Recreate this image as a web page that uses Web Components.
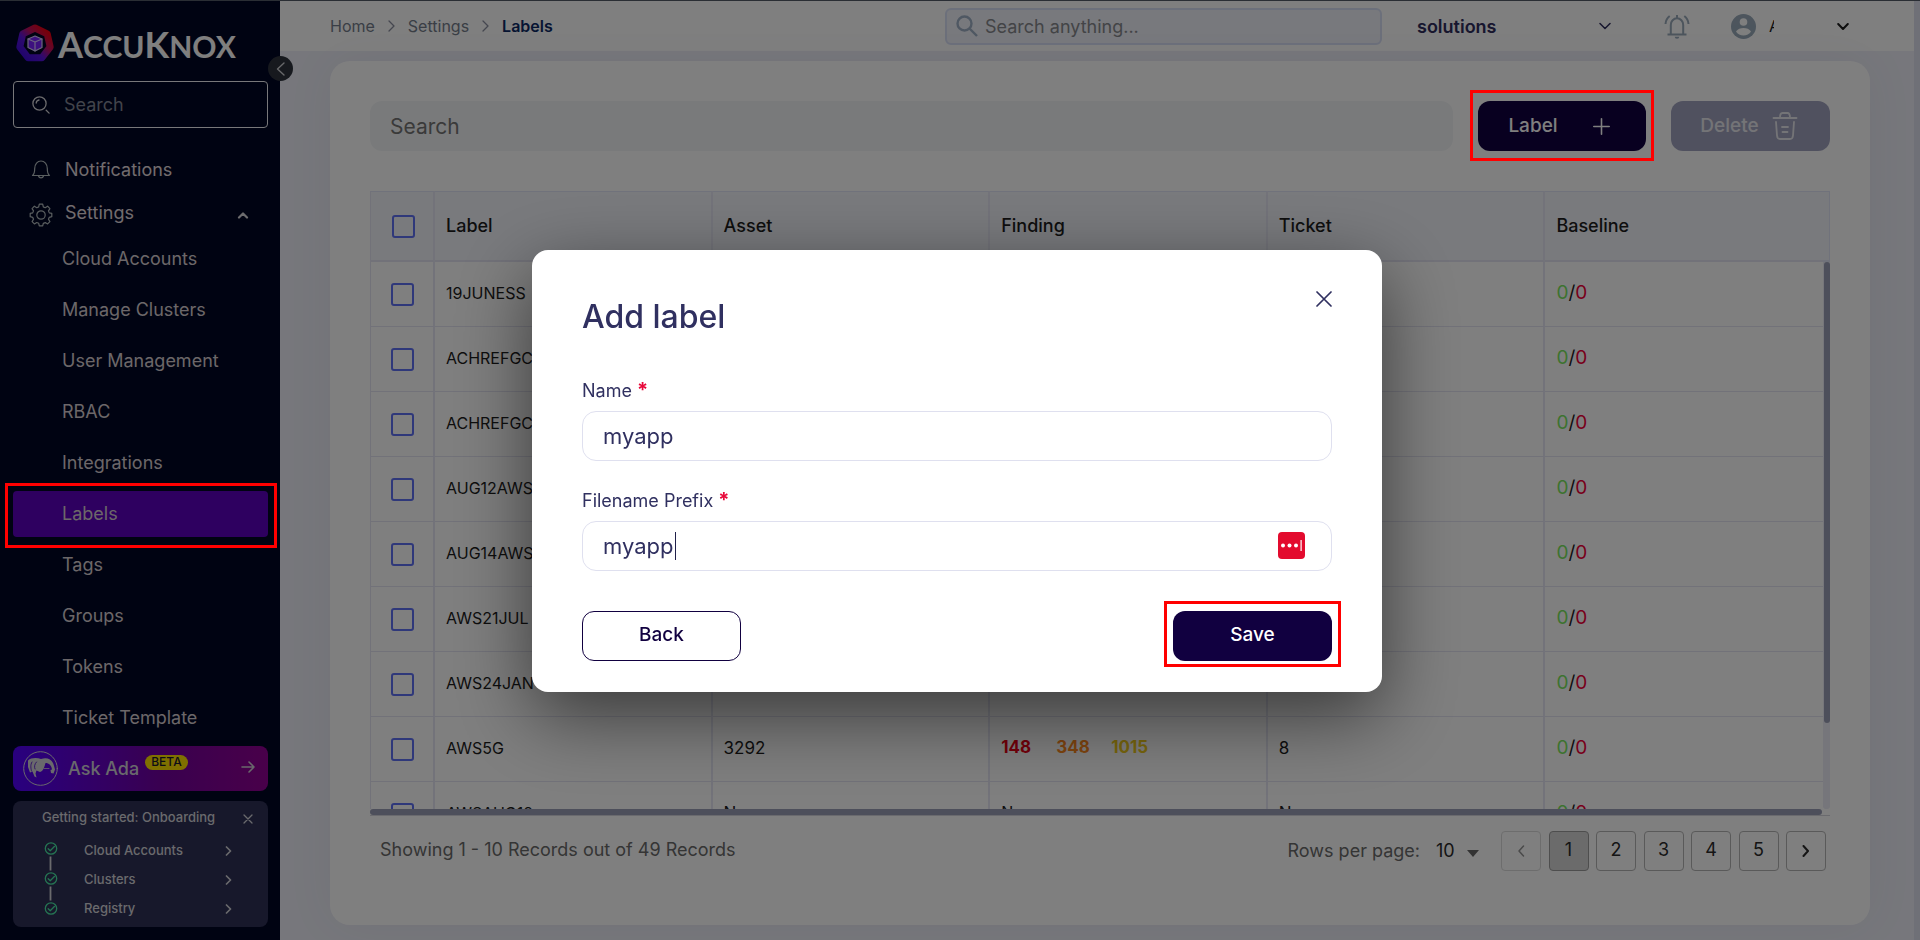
<!DOCTYPE html>
<html lang="en">
<head>
<meta charset="utf-8">
<meta name="viewport" content="width=device-width, initial-scale=1">
<title>Labels</title>
<style>
  body {
    margin: 0;
    font-family: Inter, "Open Sans", sans-serif;
    font-size: 18px;
    color: #1c1c1c;
  }
</style>
</head>
<body>
<ak-app></ak-app>
<script>
const RESET = `
  *, *::before, *::after { box-sizing: border-box; }
  button, input, select { font: inherit; color: inherit; margin: 0; padding: 0; border: 0; background: none; }
  input { min-width: 0; outline: none; }
  select { appearance: none; outline: none; }
  a { color: inherit; text-decoration: none; }
  ul, ol { list-style: none; margin: 0; padding: 0; }
  svg { display: block; flex: none; fill: none; }
  svg:not([stroke]) { stroke: currentColor; }
  svg:not([stroke-linecap]) { stroke-linecap: round; stroke-linejoin: round; }
`;

function define(name, html, setup) {
  const template = document.createElement('template');
  customElements.define(name, class extends HTMLElement {
    connectedCallback() {
      if (this.shadowRoot) return;
      template.innerHTML = `<style>${RESET}</style>` + (typeof html === 'function' ? html(this) : html);
      this.attachShadow({ mode: 'open' }).append(template.content.cloneNode(true));
      if (setup) setup(this, this.shadowRoot);
    }
  });
}

/* Red ring round whatever is slotted in */
define('ak-ring', `
<style>
  :host { display: block; position: relative; }
  .ring { position: absolute; inset: var(--ring-inset, -10px); border: 3px solid #ff0000; z-index: 20; pointer-events: none; }
</style>
<slot></slot><div class="ring"></div>`);

define('ak-button', el => `
<style>
  :host { display: block; }
  button {
    display: flex; align-items: center; justify-content: center; width: 100%; height: 50px;
    border-radius: 12px; font-size: 19px; font-weight: 500; cursor: pointer; padding-bottom: 2px;
  }
  .primary { background: #110040; color: #fff; }
  .outline { background: #fff; color: #110040; border: 1px solid #110040; }
  .muted { background: #a1a3bf; color: #e9e9ee; }
</style>
<button type="button" class="${el.getAttribute('variant')}"><slot></slot></button>`);

define('ak-nav-item', el => `
<style>
  :host { display: block; }
  a { display: flex; align-items: center; height: 46px; padding: 0 0 1px 49px; border-radius: 4px; color: #d8cfd2; }
  a.active { background: #5c00c0; }
</style>
<a href="#" class="${el.hasAttribute('active') ? 'active' : ''}"><slot></slot></a>`);

define('ak-onboarding', `
<style>
  :host { display: block; background: #2e3056; border-radius: 8px; padding: 4px 20px 5px 29px; font-size: 13px; font-weight: 500; color: #d4d4da; }
  header { display: flex; align-items: center; justify-content: space-between; height: 24px; margin-bottom: 6px; }
  button { padding: 4px 15px 0 0; margin-right: -20px; cursor: pointer; }
  .body { display: flex; gap: 26px; }
  ol { flex: 1; padding-right: 16px; }
  li a { display: flex; align-items: center; justify-content: space-between; height: 29px; }
  li svg { margin-top: 3px; }
  .steps { color: #4ae8a5; margin: 6px 0 0 2px; }
</style>
<header><span>Getting started: Onboarding</span>
  <button type="button" aria-label="Close"><svg width="10" height="10" viewBox="0 0 10 10" stroke-width="1.300"><path d="M1 1l8 8M9 1L1 9"/></svg></button>
</header>
<div class="body">
  <svg class="steps" width="14" height="76" viewBox="0 0 14 76" stroke-width="1.300">
    <path d="M6.500 15.500V29.500M6.500 45.500V59.500" stroke="#d4d4da" stroke-width="1.800" stroke-linecap="butt"/>
    <circle cx="7" cy="7.500" r="5.700"/><path d="M4.200 7.800l2 2 4.200-4.300"/>
    <circle cx="7" cy="37.500" r="5.700"/><path d="M4.200 37.800l2 2 4.200-4.300"/>
    <circle cx="7" cy="67.500" r="5.700"/><path d="M4.200 67.800l2 2 4.200-4.300"/>
  </svg>
  <ol>
    <li><a href="#">Cloud Accounts<svg width="7" height="10" viewBox="0 0 7 10" stroke-width="1.700"><path d="M1.500 1l4 4-4 4"/></svg></a></li>
    <li><a href="#">Clusters<svg width="7" height="10" viewBox="0 0 7 10" stroke-width="1.700"><path d="M1.500 1l4 4-4 4"/></svg></a></li>
    <li><a href="#">Registry<svg width="7" height="10" viewBox="0 0 7 10" stroke-width="1.700"><path d="M1.500 1l4 4-4 4"/></svg></a></li>
  </ol>
</div>`);

define('ak-sidebar', `
<style>
  :host { display: flex; flex-direction: column; position: relative; background: #000624; color: #e2d9dc; padding: 23px 12px 12px 13px; }
  .logo { display: flex; align-items: center; gap: 4px; height: 38px; padding-left: 3px; margin-bottom: 19px; color: #fff; font: 700 30px/38px Lato, sans-serif; }
  .logo big { font-size: 36px; }
  .logo span { padding-top: 3px; }
  .collapse { position: absolute; top: 55px; right: -13px; z-index: 1; display: grid; place-items: center; width: 25px; height: 25px; border-radius: 50%; background: #2e333d; color: #d0d0d4; cursor: pointer; }
  .search { display: flex; align-items: center; gap: 14px; height: 47px; padding-left: 18px; border: 1px solid #f0f0f4; border-radius: 4px; margin-bottom: 20px; color: #d8d8dc; }
  .search input { flex: 1; }
  .search input::placeholder { color: #848896; opacity: 1; }
  .top { display: flex; align-items: center; height: 43px; padding: 0 19px 0 16px; gap: 12px; }
  .top span { flex: 1; }
  .top svg { color: #b5bec0; }
  .top .gear { margin-top: 5px; }
  .top .up { margin-top: 5px; color: #d8d8dc; }
  .sub { display: grid; gap: 5px; padding: 2px 0 5px; }
  .ada { display: flex; align-items: center; height: 45px; width: 100%; padding: 0 13px 0 10px; margin-bottom: 10px; border-radius: 8px; background: linear-gradient(90deg, #5200fe, #74009e 60%, #920094); color: #d2d2d8; font-weight: 500; cursor: pointer; }
  .ada > span { margin: 0 6px 1px 10px; }
  .ada small { align-self: flex-start; margin: 9px auto 0 0; padding: 0 6px; height: 15px; border-radius: 8px; background: #ffe000; color: #1b1b2c; font-size: 12px; line-height: 13px; }
  .ada .go { margin-bottom: 4px; }
</style>
<a class="logo" href="#">
  <svg width="38" height="38" viewBox="0 0 38 38" stroke="none">
    <defs><linearGradient id="g" x1="1" y1="0" x2="0" y2="1"><stop offset=".1" stop-color="#f00010"/><stop offset=".38" stop-color="#c01060"/><stop offset=".62" stop-color="#5a12e0"/><stop offset="1" stop-color="#3a08d8"/></linearGradient></defs>
    <path d="M19 4L31.200 9.800L34.200 23L25.800 33.800H12.200L3.800 23L6.800 9.800Z" stroke="url(#g)" stroke-width="7" stroke-linejoin="round"/>
    <path d="M19 12l7 3v8.500l-7 3.500-7-3.500V15z" fill="#7a20ff" stroke="#d8c8ff" stroke-width="1.200"/>
    <path d="M12 15l7 3 7-3M19 18v9" stroke="#d8c8ff" stroke-width="1.200"/>
  </svg>
  <span><big>A</big>CCU<big>K</big>NOX</span>
</a>
<button class="collapse" type="button" aria-label="Collapse menu"><svg width="9" height="14" viewBox="0 0 9 14" stroke-width="1.400"><path d="M8 1L1.500 7 8 13"/></svg></button>
<div class="search">
  <svg width="18" height="18" viewBox="0 0 18 18" stroke-width="1.300"><circle cx="7.500" cy="7.500" r="6.600"/><path d="M4.200 7a3.300 3.300 0 0 1 2.800-3M14.200 14.200l2.900 2.900"/></svg>
  <input type="search" placeholder="Search" aria-label="Search menu">
</div>
<nav>
  <a class="top" href="#">
    <svg width="24" height="22" viewBox="0 0 24 22" stroke-width="1.200"><path d="M3.500 16.500c2-1.500 2.200-3.500 2.200-7C5.700 5 8.500 2 12 2s6.300 3 6.300 7.500c0 3.500.2 5.500 2.200 7zM9.500 17a2.600 2.600 0 0 0 5 0"/></svg>
    <span>Notifications</span>
  </a>
  <a class="top" href="#">
    <svg class="gear" width="24" height="24" viewBox="0 0 24 24" stroke-width="1.200"><circle cx="12" cy="12" r="4.200"/><path d="M10.300 1.200h3.400l.600 2.700 1.900.800 2.400-1.500 2.300 2.400-1.400 2.300.800 2 2.500.500v3.300l-2.600.700-.700 1.900 1.400 2.300-2.300 2.300-2.300-1.300-2 .800-.600 2.400h-3.400l-.600-2.500-2-.800-2.300 1.400-2.300-2.300 1.400-2.300-.800-2-2.500-.600v-3.300l2.500-.500.800-2L3.100 5.600l2.300-2.400 2.400 1.500 1.900-.800z"/></svg>
    <span>Settings</span>
    <svg class="up" width="12" height="8" viewBox="0 0 12 8" stroke-width="2.200"><path d="M2 6.500l4-4 4 4"/></svg>
  </a>
  <div class="sub">
    <ak-nav-item>Cloud Accounts</ak-nav-item>
    <ak-nav-item>Manage Clusters</ak-nav-item>
    <ak-nav-item>User Management</ak-nav-item>
    <ak-nav-item>RBAC</ak-nav-item>
    <ak-nav-item>Integrations</ak-nav-item>
    <ak-ring style="--ring-inset: -8px -9px -11px -8px"><ak-nav-item active>Labels</ak-nav-item></ak-ring>
    <ak-nav-item>Tags</ak-nav-item>
    <ak-nav-item>Groups</ak-nav-item>
    <ak-nav-item>Tokens</ak-nav-item>
    <ak-nav-item>Ticket Template</ak-nav-item>
  </div>
</nav>
<button class="ada" type="button">
  <svg width="35" height="35" viewBox="0 0 35 35" stroke-width="1"><circle cx="17.500" cy="17.500" r="16.800"/>
    <path d="M5 9.500C8 6.500 14 6.500 18 8c5-2 10-.500 12 4 1 2.400 1.500 4.500 2 6.500l-1.500 4-2.500-.500-.500-3 1.500-.500c-.500-4-3-6.500-6.500-6.500-1 3.500-2 8-5.500 9l-3.500-1.500-1 3 1 4-2-1-2-5-2.500 1L5 16z" fill="currentColor" stroke="none"/>
    <path d="M9 11c-2 3-1 7-.500 9M13.500 11c-2 2-2.500 5-1.500 7" stroke="#4a00c8" stroke-width=".8"/><path d="M21 17.500h5" stroke-width=".8"/></svg>
  <span>Ask Ada</span><small>BETA</small>
  <svg class="go" width="14" height="12" viewBox="0 0 14 12" stroke-width="1.600"><path d="M1 6h12M8 1l5 5-5 5"/></svg>
</button>
<ak-onboarding></ak-onboarding>`);

define('ak-topbar', `
<style>
  :host { display: flex; align-items: center; height: 50px; padding: 0 65px 0 50px; background: #fff; }
  nav { flex: 1; display: flex; align-items: center; gap: 13px; font-size: 16px; color: #757d8c; }
  nav svg { color: #8b8fa0; }
  nav b { font-weight: 600; color: #0d2a66; }
  .search { flex: 0 1 437px; display: flex; align-items: center; gap: 6px; height: 37px; padding: 0 8px; border: 2px solid #d9e0f6; border-radius: 6px; background: #f1f3fb; color: #9fb0c6; }
  .search input { flex: 1; }
  .search input::placeholder { color: #87898e; opacity: 1; }
  .tenant { display: flex; align-items: center; width: 194px; margin: 0 53px 0 35px; color: #302d5e; }
  .tenant select { flex: 1; font-weight: 600; }
  .icon { display: block; color: #9aabbb; cursor: pointer; }
  .user { display: flex; align-items: center; margin-left: 41px; font-size: 16px; cursor: pointer; }
  .user .face { color: #9aabbb; }
  .user span { width: 5px; margin: 0 63px 0 13px; overflow: hidden; white-space: nowrap; }
</style>
<nav aria-label="Breadcrumb">
  <a href="#">Home</a><svg width="7" height="12" viewBox="0 0 7 12" stroke-width="1.300"><path d="M1 1l5 5-5 5"/></svg>
  <a href="#">Settings</a><svg width="7" height="12" viewBox="0 0 7 12" stroke-width="1.300"><path d="M1 1l5 5-5 5"/></svg>
  <b>Labels</b>
</nav>
<div class="search">
  <svg width="24" height="24" viewBox="0 0 24 24" stroke-width="2.400" stroke-linecap="butt"><circle cx="9.500" cy="9.500" r="7"/><path d="M14.500 14.500l7.500 7.500"/></svg>
  <input type="search" placeholder="Search anything..." aria-label="Search anything">
</div>
<div class="tenant">
  <select aria-label="Tenant"><option>solutions</option></select>
  <svg width="12" height="8" viewBox="0 0 12 8" stroke-width="1.500"><path d="M1 1.500l5 5 5-5"/></svg>
</div>
<button class="icon" type="button" aria-label="Alerts">
  <svg width="26" height="26" viewBox="0 0 26 26" stroke-width="2" stroke-linecap="butt"><path d="M3.500 21.500h19M6.800 21.500V12a6.200 6.700 0 0 1 12.400 0v9.500M13 5V2M1.500 11c.200-3.500 1.600-6 4.200-8M24.500 11c-.200-3.500-1.600-6-4.200-8"/><path d="M10.700 23.800h4.600a2.300 2 0 0 1-4.600 0z" fill="currentColor" stroke="none"/></svg>
</button>
<button class="user" type="button">
  <svg class="face" width="25" height="25" viewBox="0 0 25 25" stroke="none"><circle cx="12.500" cy="12.500" r="12.500" fill="currentColor"/><circle cx="12.500" cy="8" r="3.800" fill="#fff"/><path d="M5 17.500c1.500-2.500 4.500-3.500 7.500-3.500s6 1 7.500 3.500c-1.500 2.600-4.500 4-7.500 4s-6-1.400-7.500-4z" fill="#fff"/></svg>
  <span>A</span>
  <svg width="12" height="9" viewBox="0 0 12 9" stroke-width="2"><path d="M1.200 2l4.800 5 4.800-5"/></svg>
</button>`);

const ROWS = [
  ['19JUNESS'], ['ACHREFGCP'], ['ACHREFGCP'], ['AUG12AWS'], ['AUG14AWS'], ['AWS21JUL'], ['AWS24JAN'],
  ['AWS5G', '3292', '<b class="crit">148</b><b class="high">348</b><b class="med">1015</b>', '8'],
  ['AWSAUG12', 'None', 'None', 'None']
];

define('ak-label-table', () => `
<style>
  :host { display: flex; flex-direction: column; min-height: 0; border-bottom: 1px solid #d4d5dc; }
  .view { flex: 1 1 0; min-height: 0; overflow: hidden; display: grid; grid-template-columns: 1fr 7px; grid-template-rows: 100%; }
  .rows { overflow: hidden; }
  table { width: 100%; table-layout: fixed; border-collapse: separate; border-spacing: 0; text-align: left; font-size: 16px; }
  .pick { width: 65px; }
  th, td { padding: 0 11px 2px; border-right: 2px solid #e6e7f4; border-bottom: 1px solid #e4e4f2; }
  th:first-child, td:first-child { padding: 0 0 0 20px; border-left: 1px solid #e4e4f2; }
  th:last-child, td:last-child { border-right: 0; }
  th { height: 71px; padding-bottom: 1px; background: #f2f4fb; font-size: 18px; font-weight: 500; border-top: 1px solid #e0e4f6; border-bottom-width: 2px; }
  th:first-child { padding-left: 21px; }
  td { height: 65px; }
  td:nth-child(3), td:nth-child(5) { font-size: 17px; }
  td:nth-child(4), td:nth-child(6) { padding-bottom: 4px; }
  td:last-child { font-size: 19px; }
  input { appearance: none; display: block; width: 23px; height: 23px; border: 2px solid #5e70f4; border-radius: 3px; }
  b { display: inline-block; min-width: 55px; font-size: 17px; font-weight: 700; }
  .crit { color: #e80014; } .high { color: #ff8a1e; } .med { color: #f2cc1c; }
  .ok { color: #7ae65f; } .bad { color: #f00038; }
  .side { display: flex; flex-direction: column; }
  .corner { height: 71px; background: #f2f4fb; border: solid #e0e4f6; border-width: 1px 1px 2px 0; }
  .track { flex: 1; background: #ececf6; border-radius: 0 0 3px 3px; }
  .thumb { height: 461px; margin-left: 1px; border-radius: 3px; background: #9b9fb6; }
  .bar { height: 6px; margin-right: 8px; border-radius: 3px; background: #9b9fb6; }
</style>
<div class="view">
  <div class="rows"><table>
    <colgroup><col class="pick"><col><col><col><col><col></colgroup>
    <thead><tr><th><input type="checkbox" aria-label="Select all"></th><th>Label</th><th>Asset</th><th>Finding</th><th>Ticket</th><th>Baseline</th></tr></thead>
    <tbody>${ROWS.map(([l, a = '', f = '', t = '']) => `<tr><td><input type="checkbox" aria-label="Select ${l}"></td><td>${l}</td><td>${a}</td><td>${f}</td><td>${t}</td><td><span class="ok">0</span>/<span class="bad">0</span></td></tr>`).join('')}</tbody>
  </table></div>
  <div class="side"><div class="corner"></div><div class="track"><div class="thumb"></div></div></div>
</div>
<div class="bar"></div>`);

define('ak-pager', `
<style>
  :host { display: flex; align-items: center; height: 40px; padding: 0 4px 0 10px; color: #6a6a6a; }
  .count { flex: 1; padding-bottom: 3px; }
  label { display: flex; align-items: center; color: #6a6a6a; padding-bottom: 2px; }
  select { width: 31px; margin-left: 16px; color: #2a2a2a; }
  .caret { margin: 7px 22px 0 0; }
  .pages { display: flex; justify-content: space-between; width: 325px; }
  button { display: grid; place-items: center; width: 40px; height: 40px; padding-bottom: 3px; border: 1px solid #b4b4b4; border-radius: 4px; color: #2a2a2a; cursor: pointer; }
  button.current { background: #d6d6d6; border-color: #9c9c9c; }
  button.end { padding: 0; }
  button:disabled { color: #949494; border-color: #dadada; }
</style>
<span class="count">Showing 1 - 10 Records out of 49 Records</span>
<label>Rows per page:<select><option>10</option></select><svg class="caret" width="12" height="7" viewBox="0 0 12 7" stroke="none"><path d="M0 0h12L6 7z" fill="#666"/></svg></label>
<div class="pages">
  <button class="end" type="button" disabled aria-label="Previous page"><svg width="8" height="12" viewBox="0 0 8 12" stroke-width="1.500"><path d="M6.500 1L2 6l4.500 5"/></svg></button>
  <button type="button" class="current">1</button><button type="button">2</button><button type="button">3</button><button type="button">4</button><button type="button">5</button>
  <button class="end" type="button" aria-label="Next page"><svg width="8" height="12" viewBox="0 0 8 12" stroke-width="2"><path d="M1.500 1L6 6l-4.500 5"/></svg></button>
</div>`);

define('ak-labels-panel', `
<style>
  :host { display: flex; flex-direction: column; padding: 40px 40px 54px; background: #fff; border-radius: 20px; box-shadow: 0 0 50px rgba(60, 64, 100, .06); }
  .tools { display: flex; align-items: center; height: 50px; margin-bottom: 40px; }
  .tools input { flex: 1; height: 50px; padding: 0 20px; margin-right: 25px; border-radius: 12px; background: #f3f5f7; font-size: 21px; }
  .tools input::placeholder { color: #757575; opacity: 1; }
  .add { width: 168px; margin-right: 25px; }
  .delete { width: 159px; }
  .add svg { margin: 2px 6px 0 35px; }
  .delete svg { margin: 2px 3px 0 13px; }
  ak-label-table { flex: 1; margin-bottom: 15px; }
</style>
<div class="tools">
  <input type="search" placeholder="Search" aria-label="Search labels">
  <ak-ring class="add" style="--ring-inset: -11px -8px -10px -8px"><ak-button variant="primary">Label<svg width="17" height="17" viewBox="0 0 17 17" stroke-width="1.600"><path d="M8.500 .8v15.400M.8 8.500h15.400"/></svg></ak-button></ak-ring>
  <ak-button class="delete" variant="muted">Delete<svg width="26" height="28" viewBox="0 0 26 28" stroke-width="1.800"><path d="M1.500 6h23M8 6c0-3.500.500-5 2.500-5h5c2 0 2.500 1.500 2.500 5M4 10l1 13.500c.200 2.300 1 3.500 3 3.500h10c2 0 2.800-1.200 3-3.500L22 10M10 15h6M10.500 20h5"/></svg></ak-button>
</div>
<ak-label-table></ak-label-table>
<ak-pager></ak-pager>`);

define('ak-field', el => `
<style>
  :host { display: block; color: #303060; }
  label { display: block; line-height: 24px; padding-top: 1px; margin-bottom: 8px; }
  label i { font: 700 20px/20px Inter, sans-serif; color: #e8093a; margin-left: 5px; }
  .box { position: relative; display: flex; align-items: center; height: 50px; padding: 0 26px 0 20px; border: 1px solid #dfe0ef; border-radius: 14px; background: #fff; }
  input { flex: 1; height: 100%; font-size: 22px; }
  .caret { position: absolute; left: 92px; top: 10px; width: 1px; height: 28px; background: #20204a; }
</style>
<label for="f">${el.getAttribute('label')}<i>*</i></label>
<div class="box"><input id="f" type="text" value="${el.getAttribute('value')}">${el.hasAttribute('focused') ? '<span class="caret"></span>' : ''}<slot></slot></div>`);

define('ak-dialog', `
<style>
  :host { position: fixed; inset: 1px 6px 0 0; z-index: 11; display: grid; place-items: center; }
  section { width: 850px; max-width: 100%; padding: 41px 50px 31px; border-radius: 16px; background: #fff; box-shadow: 0 24px 76px rgba(0, 0, 0, .55); }
  header { display: flex; justify-content: space-between; align-items: flex-start; margin-bottom: 37px; color: #303060; }
  h2 { margin: 0; padding-top: 2px; font-size: 32px; line-height: 48px; font-weight: 500; }
  header button { cursor: pointer; }
  ak-field + ak-field { margin-top: 27px; }
  footer { display: flex; justify-content: space-between; margin-top: 40px; }
  footer > * { width: 159px; }
</style>
<section role="dialog" aria-labelledby="t">
  <header><h2 id="t">Add label</h2>
    <button type="button" aria-label="Close"><svg width="16" height="16" viewBox="0 0 16 16" stroke-width="1.700"><path d="M1 1l14 14M15 1L1 15"/></svg></button>
  </header>
  <ak-field label="Name" value="myapp"></ak-field>
  <ak-field label="Filename Prefix" value="myapp" focused>
    <svg width="27" height="27" viewBox="0 0 27 27"><rect width="27" height="27" rx="4" fill="#e30b2e"/><g fill="#fff"><circle cx="5" cy="13.500" r="2"/><circle cx="11.500" cy="13.500" r="2"/><circle cx="18" cy="13.500" r="2"/><rect x="22.500" y="8" width="1.200" height="11"/></g></svg>
  </ak-field>
  <footer>
    <ak-button variant="outline">Back</ak-button>
    <ak-ring style="--ring-inset: -10px -9px -6px -9px"><ak-button variant="primary">Save</ak-button></ak-ring>
  </footer>
</section>`.replace('viewBox="0 0 27 27"', 'viewBox="0 0 27 27" stroke="none"'));

define('ak-app', `
<style>
  :host { box-sizing: border-box; display: grid; grid-template-columns: 280px 1fr 6px; min-height: 100vh; border-top: 1px solid #555c68; background: #eeeff8; }
  .page { display: flex; flex-direction: column; min-width: 0; }
  main { flex: 1; display: flex; flex-direction: column; padding: 10px 44px 15px 50px; }
  ak-labels-panel { flex: 1; }
  .gutter { background: #dfe0ee; }
  .backdrop { position: fixed; inset: 0; z-index: 10; background: rgba(0, 0, 0, .5); }
</style>
<ak-sidebar></ak-sidebar>
<div class="page"><ak-topbar></ak-topbar><main><ak-labels-panel></ak-labels-panel></main></div>
<div class="gutter"></div>
<div class="backdrop"></div>
<ak-dialog></ak-dialog>`);
</script>
</body>
</html>
